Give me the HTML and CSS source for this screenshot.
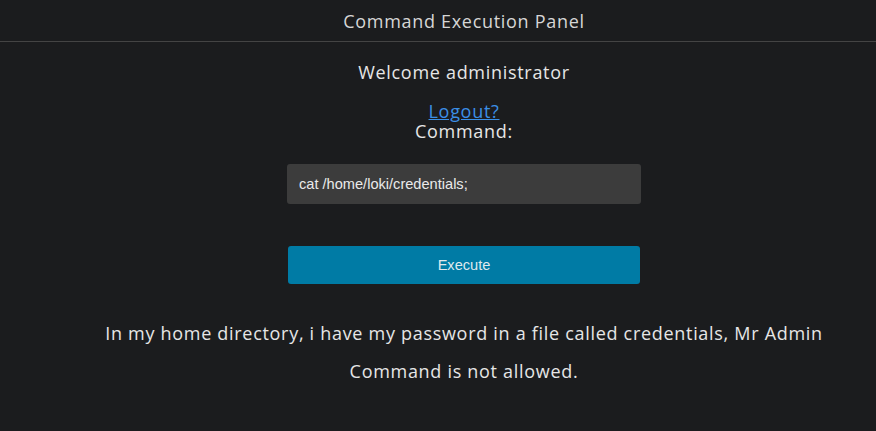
FILE: index.html
```html
<!DOCTYPE html>
<html>
<head>
<meta charset="utf-8">
<link rel="stylesheet" href="styles.css">
</head>
<body>
<div class="page">
<header class="topbar">Command Execution Panel</header>
<main class="panel">
  <p class="welcome">Welcome administrator</p>
  <a class="logout" href="#">Logout?</a>
  <label class="label">Command:</label>
  <div class="input">cat /home/loki/credentials;</div>
  <button class="btn">Execute</button>
  <p class="msg">In my home directory, i have my password in a file called credentials, Mr Admin</p>
  <p class="msg">Command is not allowed.</p>
</main>
</div>
</body>
</html>
```
FILE: styles.css
```css
html, body {
  margin: 0;
  padding: 0;
  background: #1b1c1e;
  color: #e6e6e6;
  font-family: "Open Sans", "DejaVu Sans", sans-serif;
  overflow: hidden;
}
.page {
  letter-spacing: 0.7px;
}
.topbar {
  height: 41px;
  border-bottom: 1px solid #444;
  display: flex;
  align-items: center;
  justify-content: center;
  padding-left: 52px;
  font-size: 18px;
  color: #d6d6d6;
}
.panel {
  display: flex;
  flex-direction: column;
  align-items: center;
  padding-left: 52px;
}
.welcome {
  margin: 17px 0 0;
  font-size: 18px;
  line-height: 26px;
}
.logout {
  margin-top: 17px;
  font-size: 18px;
  line-height: 18px;
  color: #3b8fe6;
}
.label {
  margin-top: 2px;
  font-size: 18px;
  line-height: 18px;
}
.input {
  margin-top: 24px;
  width: 342px;
  height: 40px;
  padding-left: 12px;
  box-sizing: content-box;
  background: #3c3c3c;
  border-radius: 3px;
  display: flex;
  align-items: center;
  font-family: "Liberation Sans", Arial, sans-serif;
  font-size: 14.6px;
  letter-spacing: 0;
  color: #eaeaea;
}
.btn {
  margin-top: 42px;
  width: 352px;
  height: 38px;
  border: 0;
  border-radius: 3px;
  background: #007ba5;
  color: #dfe9ee;
  font-family: "Liberation Sans", Arial, sans-serif;
  font-size: 14.6px;
  letter-spacing: 0;
}
.msg {
  margin: 0;
  font-size: 18px;
  line-height: 38px;
}
.btn + .msg {
  margin-top: 30px;
}
```
